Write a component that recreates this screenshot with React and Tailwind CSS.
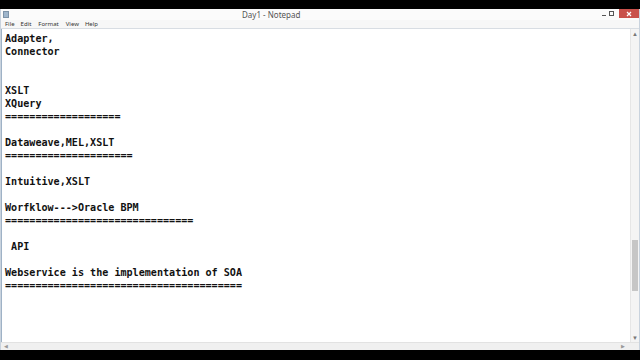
const lines = [
  'Adapter,',
  'Connector',
  '',
  '',
  'XSLT',
  'XQuery',
  '===================',
  '',
  'Dataweave,MEL,XSLT',
  '=====================',
  '',
  'Intuitive,XSLT',
  '',
  'Worfklow--->Oracle BPM',
  '===============================',
  '',
  ' API',
  '',
  'Webservice is the implementation of SOA',
  '=======================================',
]

const menu = [
  { label: 'File', x: 'ml-[4px]' },
  { label: 'Edit', x: 'ml-[6px]' },
  { label: 'Format', x: 'ml-[7px]' },
  { label: 'View', x: 'ml-[7px]' },
  { label: 'Help', x: 'ml-[6px]' },
]

function App() {
  return (
    <div className="w-[640px] h-[360px] bg-black flex flex-col overflow-hidden" style={{ fontFamily: '"Segoe UI", "Noto Sans", sans-serif' }}>
      <div className="h-[9px] shrink-0" />

      {/* window */}
      <div className="h-[341px] flex flex-col bg-[#f0f2f5] border-x border-[#c9d3de]">
        {/* title bar */}
        <div className="h-[11px] flex items-start bg-[#fbfbfb]">
          <div className="ml-[2px] mt-[2px] w-[6px] h-[7px] bg-[#9fb6cc] border border-[#7d93a8]" />
          <div className="ml-[233px] h-[11px] flex items-center text-[8px] text-[#555] leading-none">Day1 - Notepad</div>
          <div className="ml-auto flex items-start shrink-0">
            <div className="w-[4px] h-[1px] bg-[#555] mt-[6px] mr-[3px]" />
            <div className="w-[5px] h-[5px] mt-[2px] border border-[#555] mr-[5px]" />
            <div className="flex-none w-[20px] h-[9px] bg-[#c9514b] flex items-center justify-center">
              <svg width="6" height="6" viewBox="0 0 6 6">
                <path d="M1 1 L5 5 M5 1 L1 5" stroke="#ffffff" strokeWidth="1.2" />
              </svg>
            </div>
          </div>
        </div>

        {/* menu bar */}
        <div className="h-[9px] flex items-center bg-[#f7f7f7] text-[6px] text-[#333] leading-none border-b border-[#d8dde3]">
          {menu.map((m) => (
            <span key={m.label} className={m.x}>{m.label}</span>
          ))}
        </div>

        {/* edit area */}
        <div className="flex-1 flex min-h-0 bg-white border-l border-[#9fb2c6]">
          <div
            className="flex-1 pt-[3px] pl-[3px] text-[10.1px] leading-[13px] font-bold text-[#111] whitespace-pre overflow-hidden"
            style={{ fontFamily: '"DejaVu Sans Mono", "Liberation Mono", monospace' }}
          >
            {lines.map((l, i) => (
              <div key={i} className="h-[13px]">{l}</div>
            ))}
          </div>

          {/* vertical scrollbar */}
          <div className="w-[9px] bg-[#f4f4f4] border-l border-[#e6e6e6] flex flex-col items-center">
            <div className="h-[9px] flex items-center justify-center text-[6px] text-[#777] leading-none">▲</div>
            <div className="flex-1 w-full flex flex-col">
              <div className="h-[202px]" />
              <div className="h-[51px] mx-[1px] bg-[#c6c6c6]" />
            </div>
            <div className="h-[9px] flex items-center justify-center text-[6px] text-[#777] leading-none">▼</div>
          </div>
        </div>

        {/* horizontal scrollbar */}
        <div className="h-[8px] flex items-center bg-[#f0f0f0] border-t border-[#e2e2e2]">
          <div className="ml-[3px] text-[5px] text-[#999] leading-none">◀</div>
          <div className="ml-auto mr-[14px] text-[5px] text-[#999] leading-none">▶</div>
        </div>
      </div>

      <div className="flex-1" />
    </div>
  )
}

export default App
